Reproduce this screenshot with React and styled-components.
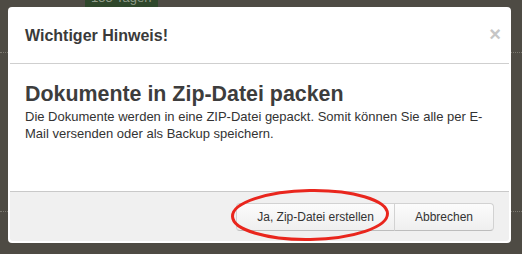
import React from "react";
import styled, { createGlobalStyle } from "styled-components";

const GlobalStyle = createGlobalStyle`
  html, body {
    margin: 0;
    padding: 0;
    background: #4e4b44;
  }
  body {
    font-family: "Liberation Sans", Arial, Helvetica, sans-serif;
  }
`;

const Page = styled.div`
  position: relative;
  width: 522px;
  height: 254px;
  overflow: hidden;
  background: #4e4b44;
`;

// what is left visible of the page behind the dialog
const Behind = styled.div`
  display: flex;
  flex-direction: column;
`;

const DaysTag = styled.span`
  align-self: flex-start;
  height: 18px;
  margin-top: -11px;
  margin-left: 85px;
  padding: 0 6px;

  background: #2f472b;
  color: #8f9a89;
  font-size: 13px;
  line-height: 18px;
`;

const TableRow = styled.div`
  height: ${(p) => p.h}px;
  border-bottom: 1px dotted #7c7970;
`;

const Modal = styled.div`
  position: absolute;
  top: 7px;
  left: 8px;

  width: 499px;
  padding: 2px;

  border-radius: 4px;
  background: #fff;
`;

const Header = styled.div`
  display: flex;
  justify-content: space-between;
  align-items: flex-start;

  padding: 17px 8px 17px 15px;
  border-bottom: 1px solid #cfcfcf;
`;

const HeaderTitle = styled.h3`
  margin: 0;

  color: #3a3a3a;
  font-size: 16px;
  font-weight: bold;
  line-height: 20px;
`;

const Close = styled.button`
  margin-top: -2px;
  padding: 0;

  border: none;
  background: none;

  color: #c6c6c6;
  font-family: "Liberation Sans", Arial, sans-serif;
  font-size: 20px;
  font-weight: bold;
  line-height: 20px;
  cursor: pointer;
`;

const Body = styled.div`
  padding: 17px 15px 15px;
`;

const Heading = styled.h2`
  margin: 0;

  color: #3d3d3d;
  font-size: 21.4px;
  font-weight: bold;
  line-height: 26px;
`;

const Text = styled.p`
  margin: 1px 0 34px;

  color: #333;
  font-size: 13px;
  line-height: 17px;
`;

const Footer = styled.div`
  display: flex;
  justify-content: flex-end;

  padding: 11px 15px 10px;
  border-top: 1px solid #c9c9c9;
  border-radius: 0 0 3px 3px;
  background: #f0f0f0;
`;

const Marked = styled.span`
  position: relative;
  display: flex;
`;

const Button = styled.button`
  height: 28px;
  padding: 4px 20px;

  border: 1px solid #d2d2d2;
  border-bottom-color: #bdbdbd;
  border-radius: ${(p) => (p.first ? "4px 0 0 4px" : "0 4px 4px 0")};
  margin-left: ${(p) => (p.first ? "0" : "-1px")};
  background: linear-gradient(#fcfcfc, #efefef);

  color: #333;
  font-family: "Liberation Sans", Arial, sans-serif;
  font-size: 12px;
  line-height: 18px;
  white-space: nowrap;
  cursor: pointer;
`;

const Circle = styled.svg`
  position: absolute;
  left: -11px;
  top: -16px;
  pointer-events: none;
`;

export default function App() {
  return (
    <Page>
      <GlobalStyle />
      <Behind>
        <DaysTag>155 Tagen</DaysTag>
        <TableRow h={45} />
        <TableRow h={158} />
      </Behind>

      <Modal>
        <Header>
          <HeaderTitle>Wichtiger Hinweis!</HeaderTitle>
          <Close aria-label="Schließen">×</Close>
        </Header>

        <Body>
          <Heading>Dokumente in Zip-Datei packen</Heading>
          <Text>
            Die Dokumente werden in eine ZIP-Datei gepackt. Somit können Sie
            alle per E-Mail versenden oder als Backup speichern.
          </Text>
        </Body>

        <Footer>
          <Marked>
            <Button first>Ja, Zip-Datei erstellen</Button>
            <Circle width="170" height="56" viewBox="0 0 170 56">
              <ellipse
                cx="85"
                cy="28"
                rx="77.5"
                ry="24.5"
                fill="none"
                stroke="#e9261d"
                strokeWidth="3"
                transform="rotate(-1 85 28)"
              />
            </Circle>
          </Marked>
          <Button>Abbrechen</Button>
        </Footer>
      </Modal>
    </Page>
  );
}
